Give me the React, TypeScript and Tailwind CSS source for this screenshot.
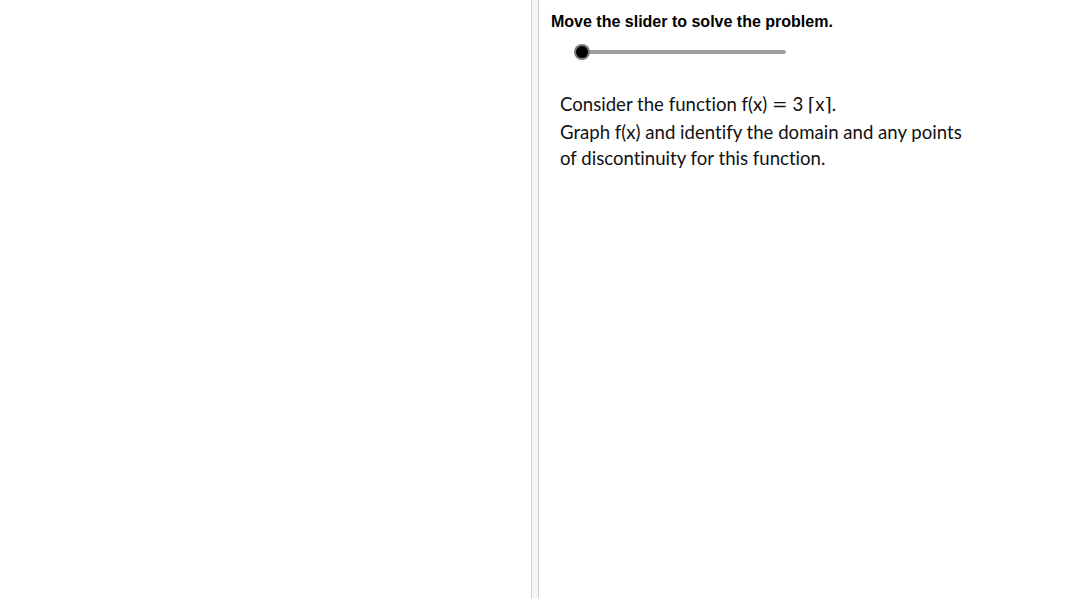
export default function App() {
  return (
    <div className="flex h-[600px] w-[1087px] bg-white">
      <div className="w-[531px] shrink-0" />
      <div className="h-[598px] w-[8px] shrink-0 border-x border-[#cfcfcf] bg-[#f6f6f6]" />
      <div className="flex-1 pl-[12px] pt-[11px]">
        <div
          className="text-[16px] font-bold leading-[21px] text-black"
          style={{ fontFamily: '"Liberation Sans", Arial, sans-serif' }}
        >
          Move the slider to solve the problem.
        </div>
        <div className="relative mt-[11px] ml-[23px] h-[18px] w-[214px]">
          <div className="absolute left-[8px] top-[7px] h-[4px] w-[204px] rounded-full bg-[#9e9e9e]" />
          <div className="absolute left-0 top-[1px] h-[16px] w-[16px] rounded-full bg-[#7a7a7a] p-[2px]">
            <div className="h-full w-full rounded-full bg-black" />
          </div>
        </div>
        <div
          className="mt-[30px] ml-[9px] text-[18.6px] leading-[26.5px] text-[#111] [font-variant-ligatures:none]"
          style={{ fontFamily: 'Lato, "Open Sans", sans-serif' }}
        >
          <div>
            Consider the function f(x){' '}
            <span style={{ fontFamily: '"DejaVu Serif", serif' }}>=</span> 3{' '}
            <span style={{ fontFamily: '"DejaVu Serif", serif' }}>⌈</span>x
            <span style={{ fontFamily: '"DejaVu Serif", serif' }}>⌉</span>.
          </div>
          <div>Graph f(x) and identify the domain and any points</div>
          <div>of discontinuity for this function.</div>
        </div>
      </div>
    </div>
  );
}
